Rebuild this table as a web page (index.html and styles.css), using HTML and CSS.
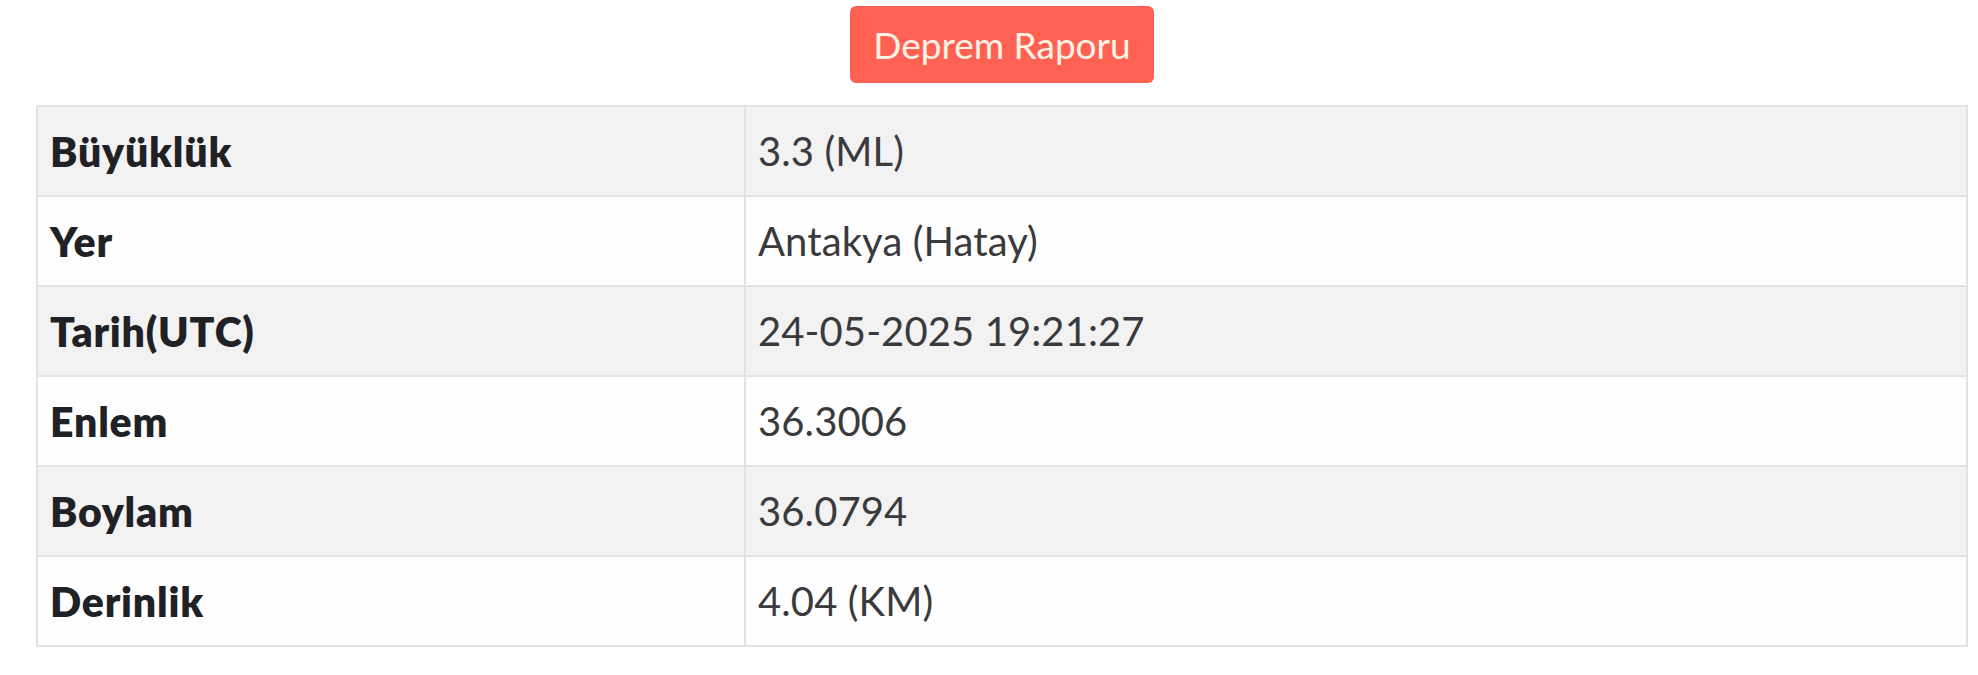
FILE: index.html
```html
<!DOCTYPE html>
<html lang="tr">
<head>
<meta charset="utf-8">
<title>Deprem Raporu</title>
<link rel="stylesheet" href="styles.css">
</head>
<body>
<div class="page">
  <div class="actions">
    <button class="btn-report" type="button">Deprem Raporu</button>
  </div>
  <table class="report">
    <colgroup><col class="col-label"><col class="col-value"></colgroup>
    <tbody>
      <tr><th>Büyüklük</th><td>3.3 (ML)</td></tr>
      <tr><th>Yer</th><td>Antakya (Hatay)</td></tr>
      <tr><th>Tarih(UTC)</th><td>24-05-2025 19:21:27</td></tr>
      <tr><th>Enlem</th><td>36.3006</td></tr>
      <tr><th>Boylam</th><td>36.0794</td></tr>
      <tr><th>Derinlik</th><td>4.04 (KM)</td></tr>
    </tbody>
  </table>
</div>
</body>
</html>
```
FILE: styles.css
```css
* { box-sizing: border-box; }
html, body {
  margin: 0;
  padding: 0;
  background: #ffffff;
}
body {
  font-family: Lato, "Open Sans", "Liberation Sans", sans-serif;
}
.page {
  padding: 6px 10px 0 36px;
  display: flex;
  flex-direction: column;
  gap: 22px;
}
.actions {
  display: flex;
  justify-content: center;
}
.btn-report {
  width: 304px;
  height: 77px;
  border: none;
  border-radius: 6px;
  background: #ff6153;
  color: #fff3e6;
  font-family: Lato, "Liberation Sans", sans-serif;
  font-size: 37px;
  font-weight: 400;
  padding: 0;
  cursor: pointer;
}
.report {
  width: 100%;
  border-collapse: collapse;
  table-layout: fixed;
  border: 2px solid #e3e3e5;
}
.col-label { width: 708px; }
.report th,
.report td {
  height: 90px;
  padding: 0 12px;
  border: 2px solid #e3e3e5;
  text-align: left;
  vertical-align: middle;
}
.report th {
  font-weight: 800;
  color: #1f2125;
  font-size: 41px;
  letter-spacing: 0.8px;
}
.report td {
  font-weight: 400;
  color: #3a3a3c;
  font-size: 40px;
  letter-spacing: 0.1px;
}
.report tr:nth-child(odd) {
  background: #f2f2f3;
}
.report tr:nth-child(even) {
  background: #fefefe;
}
```
